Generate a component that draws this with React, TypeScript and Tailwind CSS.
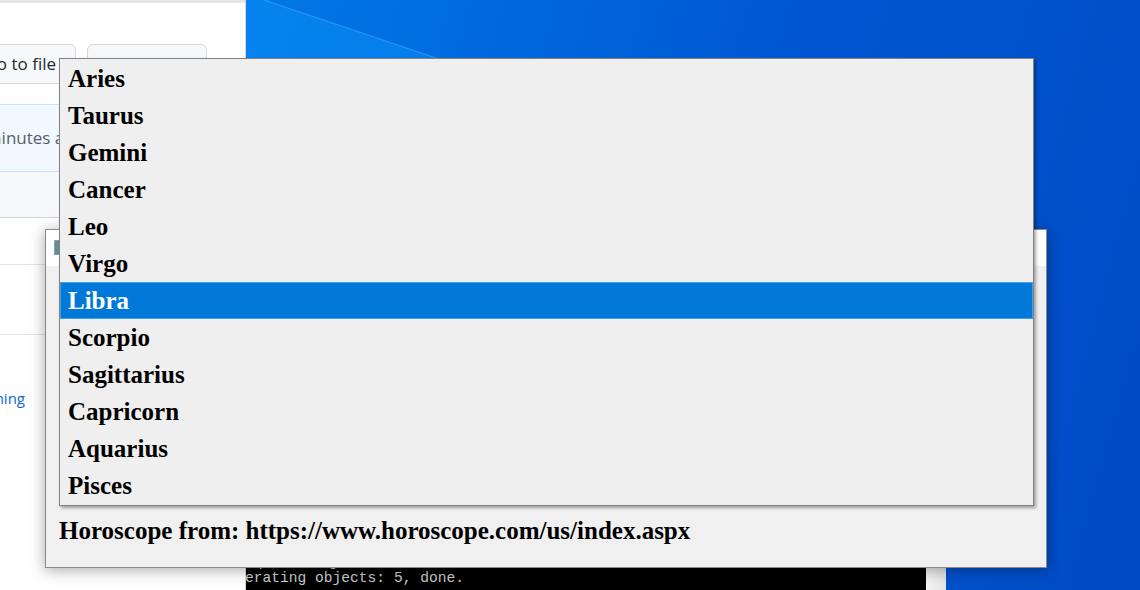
const SIGNS = [
  "Aries",
  "Taurus",
  "Gemini",
  "Cancer",
  "Leo",
  "Virgo",
  "Libra",
  "Scorpio",
  "Sagittarius",
  "Capricorn",
  "Aquarius",
  "Pisces",
];

const serif = "font-['Liberation_Serif','Times_New_Roman',serif]";

export default function App() {
  const selected = "Libra";

  return (
    <div className="relative w-[1140px] h-[590px] overflow-hidden bg-[linear-gradient(105deg,#0b86f0_0%,#0070e2_30%,#0058d2_60%,#004bc6_100%)]">
      {/* Wallpaper light beam */}
      <svg className="absolute left-0 top-0 pointer-events-none" width="1140" height="590">
        <polygon points="245,0 264,0 442,60 245,60" fill="#0a8cf6" opacity="0.55" />
        <line x1="264" y1="0" x2="442" y2="60" stroke="#3aa2f8" strokeWidth="1.2" opacity="0.7" />
      </svg>

      {/* Browser window behind */}
      <BrowserWindow />

      {/* Terminal behind */}
      <div className="absolute left-[246px] top-[554px] w-[700px] h-[40px] flex">
        <div className="w-[680px] bg-black font-['Liberation_Mono','DejaVu_Sans_Mono',monospace] text-[14.6px] leading-[16px] text-[#cccccc] overflow-hidden whitespace-nowrap">
          <div className="-ml-[5px]">t push origin master</div>
          <div className="-ml-[1px]">erating objects: 5, done.</div>
        </div>
        <div className="w-[20px] bg-[linear-gradient(90deg,#f4f4f4,#e2e2e2)]" />
      </div>

      {/* App window */}
      <div className="absolute left-[45px] top-[229px] w-[1002px] h-[339px] flex flex-col bg-[#f0f0f0] border border-[#8a8a8a] shadow-[0_2px_14px_rgba(0,0,0,0.35)]">
        <div className="h-[36px] bg-white flex items-start pt-[10px] pl-[8px]">
          <div className="w-[6px] h-[15px] border border-[#8aa0a8] bg-[#5f8f96]" />
        </div>
        <div className="flex-1" />
        <div className={`${serif} font-bold text-[25px] leading-[28px] text-black pl-[13px] pb-[22px]`}>
          Horoscope from: https://www.horoscope.com/us/index.aspx
        </div>
      </div>

      {/* Dropdown list */}
      <div className="absolute left-[59px] top-[58px] w-[975px] h-[448px] bg-[#efefef] border border-[#828282] shadow-[2px_2px_3px_rgba(0,0,0,0.35)] pt-[1px]">
        <ul className={`${serif} font-bold text-[25px] text-black`}>
          {SIGNS.map((s) =>
            s === selected ? (
              <li
                key={s}
                className="h-[37px] leading-[35px] pl-[7px] bg-[#0078d7] border border-[#3f9ff0] text-white"
              >
                {s}
              </li>
            ) : (
              <li key={s} className="h-[37px] leading-[37px] pl-[8px]">
                {s}
              </li>
            )
          )}
        </ul>
      </div>
    </div>
  );
}

function BrowserWindow() {
  return (
    <div className="absolute left-0 top-0 w-[246px] h-[590px] bg-white border-r border-[#d8d8d8] flex flex-col font-['Open_Sans','Liberation_Sans',sans-serif] overflow-hidden">
      <div className="h-[3px] bg-[#e6e6e6] shrink-0" />
      <div className="h-[41px] shrink-0" />
      <div className="h-[40px] flex gap-[11px] shrink-0 -ml-[30px]">
        <div className="w-[106px] rounded-[6px] border border-[#d0d7de] bg-[#f6f8fa] flex items-center justify-end pr-[19px] text-[17px] text-[#24292f] whitespace-nowrap">
          Go to file
        </div>
        <div className="w-[120px] rounded-[6px] border border-[#d0d7de] bg-[#f6f8fa] flex items-center justify-center text-[17px] text-[#24292f]">
          Add file
        </div>
      </div>
      <div className="h-[20px] shrink-0" />
      <div className="h-[68px] shrink-0 bg-[#f1f8ff] border-y border-[#c8e1ff] flex items-center -ml-[38px] text-[17px] text-[#57606a] whitespace-nowrap">
        14 minutes ago
      </div>
      <div className="h-[46px] shrink-0 bg-[#f6f8fa] border-b border-[#d0d7de]" />
      <div className="h-[47px] shrink-0 border-b border-[#e1e4e8]" />
      <div className="h-[70px] shrink-0 border-b border-[#e1e4e8]" />
      <div className="h-[52px] shrink-0" />
      <div className="w-[25px] flex justify-end whitespace-nowrap text-[15px] text-[#0969da]">
        Publishing
      </div>
    </div>
  );
}
